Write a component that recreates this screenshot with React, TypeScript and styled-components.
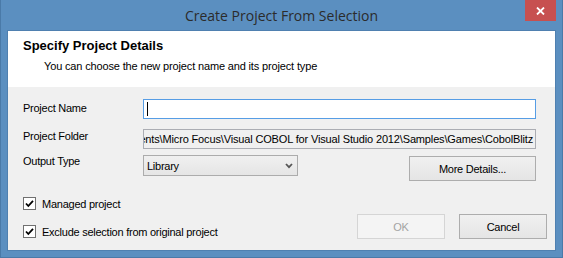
import React from "react";
import styled, { createGlobalStyle } from "styled-components";

const Global = createGlobalStyle`
  html, body { margin: 0; padding: 0; background: #5b8fc0; }
  body { font-family: "Liberation Sans", Arial, sans-serif; font-size: 11px; color: #000; }
  * { box-sizing: border-box; }
`;

const Window = styled.div`
  width: 563px;
  height: 258px;
  background: #5b8fc0;
  box-shadow: inset 1px 0 0 #4a7aa8, inset -1px 0 0 #4a7aa8, inset 0 -1px 0 #4a7aa8;
  display: flex;
  flex-direction: column;
  padding: 0 8px 8px;
`;

const TitleBar = styled.div`
  height: 31px;
  margin: 0 -8px;
  display: grid;
  grid-template-columns: 1fr auto 1fr;
`;

const TitleText = styled.div`
  grid-column: 2;
  font-family: "Open Sans", "Noto Sans", sans-serif;
  font-size: 14px;
  line-height: 20px;
  padding-top: 6px;
  color: #2b2b2b;
  white-space: nowrap;
`;

const CloseButton = styled.div`
  grid-column: 3;
  justify-self: end;
  width: 31px;
  height: 21px;
  margin-right: 7px;
  background: #c75050;
  display: flex;
  align-items: center;
  justify-content: center;
`;

const Client = styled.div`
  flex: 1;
  display: flex;
  flex-direction: column;
  background: #f0f0f0;
  box-shadow: 0 0 0 1px #4f80b0;
`;

const Header = styled.div`
  height: 56px;
  background: #ffffff;
  padding: 7px 15px 0;
`;

const Heading = styled.div`
  font-family: "Liberation Sans", Arial, sans-serif;
  font-weight: bold;
  font-size: 13px;
  line-height: 16px;
`;

const SubHeading = styled.div`
  margin: 6px 0 0 21px;
  font-size: 11px;
  line-height: 13px;
  letter-spacing: -0.15px;
`;

const Body = styled.div`
  flex: 1;
  display: flex;
  flex-direction: column;
  padding: 12px 8px 11px 15px;
`;

const FormGrid = styled.div`
  display: grid;
  grid-template-columns: 120px 1fr;
  margin-right: 11px;
`;

const Label = styled.div<{ $offset: number; $top: number }>`
  margin-top: ${(p) => p.$top}px;
  padding-top: ${(p) => p.$offset}px;
  font-size: 11px;
  line-height: 13px;
  letter-spacing: -0.25px;
  white-space: nowrap;
`;

const TextBox = styled.div<{ $focused?: boolean; $readOnly?: boolean; $top: number }>`
  margin-top: ${(p) => p.$top}px;
  height: 20px;
  border: 1px solid ${(p) => (p.$focused ? "#569de5" : "#abadb3")};
  background: ${(p) => (p.$readOnly ? "#f0f0f0" : "#ffffff")};
  display: flex;
  align-items: center;
  justify-content: ${(p) => (p.$readOnly ? "flex-end" : "flex-start")};
  overflow: hidden;
  padding: 0 2px 0 2px;
  font-size: 11px;
  line-height: 18px;
  letter-spacing: -0.15px;
  white-space: nowrap;
`;

const Caret = styled.span`
  width: 1px;
  height: 14px;
  margin-left: 1px;
  background: #000;
`;

const ThirdRow = styled.div<{ $top: number }>`
  margin-top: ${(p) => p.$top}px;
  display: flex;
  justify-content: space-between;
  align-items: flex-start;
`;

const Combo = styled.div`
  width: 155px;
  height: 21px;
  border: 1px solid #acacac;
  background: linear-gradient(#f0f0f0, #e5e5e5);
  display: flex;
  align-items: center;
  justify-content: space-between;
  padding: 0 4px 0 3px;
  font-size: 11px;
  letter-spacing: -0.25px;
`;

const Button = styled.div<{ $width: number; $disabled?: boolean; $top?: number }>`
  width: ${(p) => p.$width}px;
  height: 25px;
  margin-top: ${(p) => p.$top ?? 0}px;
  border: 1px solid ${(p) => (p.$disabled ? "#d5d5d5" : "#adadad")};
  background: ${(p) => (p.$disabled ? "#f4f4f4" : "linear-gradient(#f0f0f0, #e5e5e5)")};
  color: ${(p) => (p.$disabled ? "#a3a3a3" : "#000")};
  display: flex;
  align-items: center;
  justify-content: center;
  font-size: 11px;
  letter-spacing: -0.25px;
`;

const Footer = styled.div`
  margin-top: auto;
  display: flex;
  justify-content: space-between;
  align-items: flex-end;
`;

const CheckList = styled.div`
  display: flex;
  flex-direction: column;
  gap: 15px;
  margin-bottom: 1px;
`;

const CheckRow = styled.div`
  display: flex;
  align-items: center;
  gap: 6px;
  height: 13px;
  font-size: 11px;
  letter-spacing: -0.25px;
  white-space: nowrap;
`;

const Box = styled.div`
  width: 13px;
  height: 13px;
  border: 1px solid #707070;
  background: #fff;
  display: flex;
  align-items: center;
  justify-content: center;
`;

const Buttons = styled.div`
  display: flex;
  gap: 14px;
`;

const Check = () => (
  <Box>
    <svg width="9" height="9" viewBox="0 0 9 9">
      <path d="M1 4.5 L3.3 7 L8 1.8" fill="none" stroke="#000" strokeWidth="1.8" />
    </svg>
  </Box>
);

export default function App() {
  return (
    <>
      <Global />
      <Window>
        <TitleBar>
          <TitleText>Create Project From Selection</TitleText>
          <CloseButton>
            <svg width="9" height="8" viewBox="0 0 9 8">
              <path d="M1 0.5 L8 7.5 M8 0.5 L1 7.5" stroke="#fff" strokeWidth="1.8" />
            </svg>
          </CloseButton>
        </TitleBar>
        <Client>
          <Header>
            <Heading>Specify Project Details</Heading>
            <SubHeading>You can choose the new project name and its project type</SubHeading>
          </Header>
          <Body>
            <FormGrid>
              <Label $offset={3} $top={0}>Project Name</Label>
              <TextBox $focused $top={0}>
                <Caret />
              </TextBox>
              <Label $offset={1} $top={10}>Project Folder</Label>
              <TextBox $readOnly $top={10}>
                ents\Micro Focus\Visual COBOL for Visual Studio 2012\Samples\Games\CobolBlitz
              </TextBox>
              <Label $offset={0} $top={6}>Output Type</Label>
              <ThirdRow $top={6}>
                <Combo>
                  <span>Library</span>
                  <svg width="8" height="6" viewBox="0 0 8 6">
                    <path d="M1 1 L4 4.2 L7 1" fill="none" stroke="#555" strokeWidth="1.8" />
                  </svg>
                </Combo>
                <Button $width={127} $top={1}>More Details...</Button>
              </ThirdRow>
            </FormGrid>
            <Footer>
              <CheckList>
                <CheckRow>
                  <Check />
                  Managed project
                </CheckRow>
                <CheckRow>
                  <Check />
                  Exclude selection from original project
                </CheckRow>
              </CheckList>
              <Buttons>
                <Button $width={88} $disabled>OK</Button>
                <Button $width={88}>Cancel</Button>
              </Buttons>
            </Footer>
          </Body>
        </Client>
      </Window>
    </>
  );
}
